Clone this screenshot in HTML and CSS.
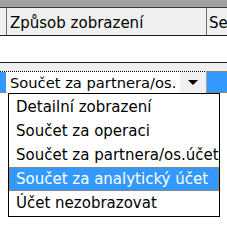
FILE: index.html
```html
<!DOCTYPE html>
<html lang="cs">
<head>
    <meta charset="UTF-8">
    <title>Způsob zobrazení</title>
    <link rel="stylesheet" href="styles.css">
</head>
<body>
    <div class="grid">
        <div class="topbar"></div>
        <div class="header">
            <div class="hcell stub"></div>
            <div class="hcell name">Způsob zobrazení</div>
            <div class="hcell next">Se</div>
        </div>
        <div class="row blank"></div>
        <div class="row gap"></div>
        <div class="edit-row">
            <div class="sel-edge left"></div>
            <div class="combo">
                <span class="combo-text">Součet za partnera/os.</span>
                <div class="combo-btn">
                    <svg width="10" height="6" viewBox="0 0 10 6"><path d="M0 0h10L5 5z" fill="#000"/></svg>
                </div>
            </div>
            <div class="sel-edge right"></div>
        </div>
        <div class="under"></div>

        <ul class="dropdown">
            <li>Detailní zobrazení</li>
            <li>Součet za operaci</li>
            <li>Součet za partnera/os.účet</li>
            <li class="active">Součet za analytický účet</li>
            <li>Účet nezobrazovat</li>
        </ul>
    </div>
</body>
</html>
```

FILE: styles.css
```css
* {
    box-sizing: border-box;
    margin: 0;
    padding: 0;
}

body {
    font-family: 'DejaVu Sans', Tahoma, sans-serif;
    font-size: 14px;
    color: #000;
    background: #fff;
    overflow: hidden;
}

.grid {
    position: relative;
    width: 227px;
    height: 226px;
}

.topbar {
    height: 8px;
    background-color: #a0a0a0;
    border-bottom: 1px solid #3c3c3c;
}

.header {
    display: flex;
    height: 28px;
    background-color: #f0f0f0;
    border-bottom: 1px solid #1e1e1e;
}

.hcell {
    display: flex;
    align-items: center;
    padding-top: 2px;
    white-space: nowrap;
    overflow: hidden;
    border-right: 1px solid #6e6e6e;
}

.stub {
    width: 7px;
}

.name {
    width: 200px;
    padding-left: 3px;
    font-size: 15px;
}

.next {
    flex: 1;
    padding-left: 2px;
    font-size: 15px;
    border-right: none;
}

.row.blank {
    height: 27px;
    border-bottom: 1px solid #1e1e1e;
}

.row.gap {
    height: 8px;
    background-color: #f0f0f0;
}

.edit-row {
    display: flex;
    height: 22px;
    border-top: 1px dotted #000;
}

.sel-edge {
    background-color: #3399ff;
    border-bottom: 1px dotted #c87a2a;
}

.sel-edge.left {
    width: 7px;
    border-right: 1px solid #fff;
}

.sel-edge.right {
    flex: 1;
    border-left: 1px solid #a0a0a0;
    border-top: 1px dotted #c87a2a;
    margin-top: -1px;
}

.combo {
    display: flex;
    width: 199px;
    background: #fff;
}

.combo-text {
    flex: 1;
    padding-left: 3px;
    font-size: 14.7px;
    line-height: 21px;
    white-space: nowrap;
    overflow: hidden;
}

.combo-btn {
    width: 26px;
    display: flex;
    align-items: center;
    justify-content: center;
    background-color: #f0f0f0;
}

.under {
    height: 130px;
}

.dropdown {
    position: absolute;
    left: 8px;
    top: 93px;
    width: 212px;
    list-style: none;
    background: #fff;
    border: 1px solid #000;
    padding: 1px 0;
}

.dropdown li {
    height: 24px;
    line-height: 23px;
    padding-left: 6px;
    font-size: 15px;
    white-space: nowrap;
    border: 1px solid transparent;
}

.dropdown li.active {
    background-color: #3399ff;
    color: #fff;
    border: 1px dotted #c87a2a;
}
```
